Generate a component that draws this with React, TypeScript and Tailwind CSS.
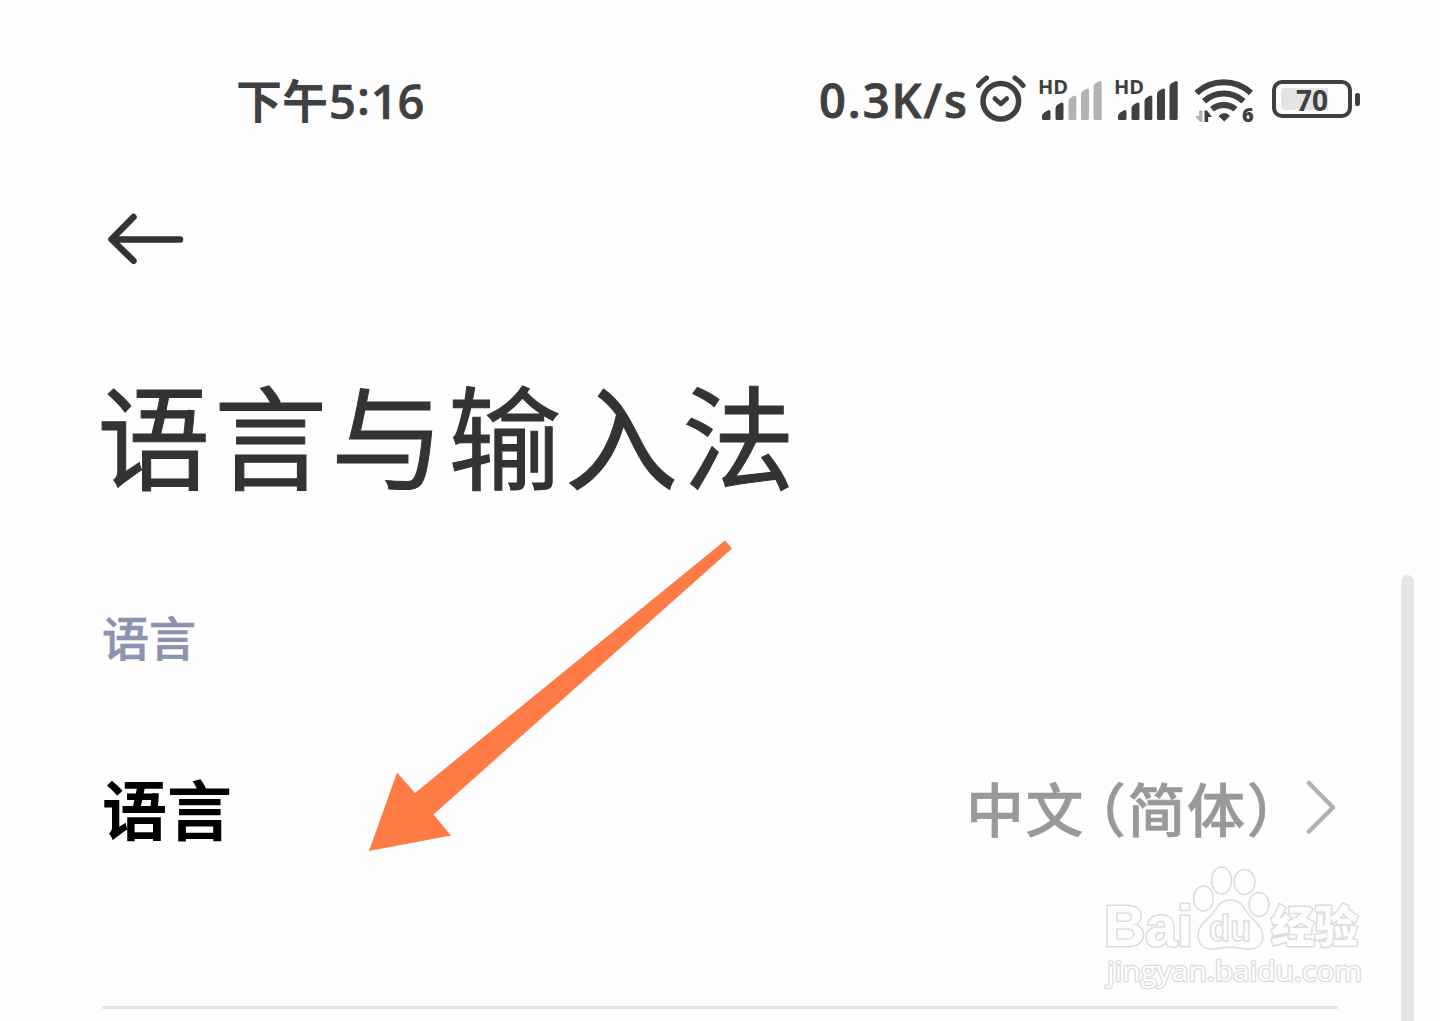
import React from "react";

interface SignalProps {
  active: number;
  className?: string;
}

const BARS = [
  "M2 43.500v-2.500q0-2 2-3.200l3.500-2.200q3-1.500 3 1.500v6.400q0 1.500-1.500 1.500h-5.500q-1.500 0-1.500-1.500z",
  "M15.500 43.500v-10.500q0-2 2-3.200l3-1.800q3-1.500 3 1.500v14q0 1.500-1.500 1.500h-5q-1.500 0-1.500-1.500z",
  "M28.500 43.500v-17.500q0-2 2-3.200l2.800-1.800q3-1.500 3 1.500v21q0 1.500-1.500 1.500h-4.800q-1.500 0-1.500-1.500z",
  "M41 43.500v-24.500q0-2 2-3.200l3-1.800q3-1.500 3 1.500v28q0 1.500-1.500 1.500h-5q-1.500 0-1.500-1.500z",
  "M53.500 43.500v-32q0-2 2-3.200l3.200-1.800q3-1.500 3 1.500v35.500q0 1.500-1.500 1.500h-5.200q-1.500 0-1.500-1.500z",
];

const Signal: React.FC<SignalProps> = ({ active, className }) => (
  <div className={`relative w-[64px] h-[50px] ${className ?? ""}`}>
    <span className="absolute left-[-2px] top-[2px] font-['Open_Sans',sans-serif] text-[20px] leading-[20px] font-bold">
      HD
    </span>
    <svg className="w-[64px] h-[50px]" viewBox="0 0 64 50">
      {BARS.map((d, i) => (
        <path key={d} d={d} fill={i < active ? "#404040" : "#b3b3b3"} />
      ))}
    </svg>
  </div>
);

const AlarmIcon: React.FC = () => (
  <svg
    className="w-[52px] h-[50px]"
    viewBox="0 0 52 50"
    fill="none"
    stroke="#404040"
  >
    <circle cx="24.800" cy="26.200" r="17.800" strokeWidth="5.500" />
    <path
      d="M18.800 23.500l6 5.500 6-5.500"
      strokeWidth="4.500"
      strokeLinecap="round"
      strokeLinejoin="round"
    />
    <path
      d="M2.500 10.500Q6 6 10.500 3M47 10.500Q43.500 6 39 3"
      strokeWidth="5"
      strokeLinecap="round"
    />
  </svg>
);

const WifiIcon: React.FC = () => (
  <div className="relative w-[60px] h-[50px]">
    <svg className="w-[60px] h-[50px]" viewBox="0 0 60 50" fill="none">
      <g stroke="#404040" strokeWidth="6">
        <path d="M1.500 18A40 40 0 0 1 56 18" />
        <path d="M9 26.300A29 29 0 0 1 48.500 26.300" />
        <path d="M17 34.300A18 18 0 0 1 40.500 34.300" />
      </g>
      <path
        d="M24 41q5.500-5 10.500 0l-5.200 5z"
        fill="#404040"
        stroke="#404040"
        strokeWidth="1"
        strokeLinejoin="round"
      />
      <path d="M7.500 35.500v11.500h-2.500l-5-6h4v-5.500z" fill="#b3b3b3" />
      <path d="M9.500 35.500h2.500l5 6.500h-3.800v5h-3.700z" fill="#404040" />
    </svg>
    <span className="absolute left-[47px] top-[30px] font-['Open_Sans',sans-serif] text-[20px] leading-[20px] font-extrabold">
      6
    </span>
  </div>
);

const Battery: React.FC = () => (
  <div className="flex items-center gap-[3px]">
    <div className="relative flex w-[80px] h-[38px] items-center justify-center rounded-[10px] border-4 border-[#404040]">
      <div className="absolute left-[5px] top-[4px] h-[22px] w-[47px] rounded-l-[3px] bg-[#e4e4e4]" />
      <span className="relative top-px font-['Open_Sans',sans-serif] text-[28px] leading-[28px] font-bold">
        70
      </span>
    </div>
    <div className="h-[13px] w-[5px] rounded-[2px] bg-[#404040]" />
  </div>
);

const Watermark: React.FC = () => (
  <svg
    className="absolute left-[1090px] top-[850px] h-[150px] w-[290px]"
    viewBox="0 0 290 150"
    fill="#fefefe"
    stroke="#dcdcdc"
    strokeWidth="1.500"
  >
    <g strokeWidth="3" paintOrder="stroke" strokeLinejoin="round">
      <text
        x="14"
        y="96"
        textLength="89"
        lengthAdjust="spacingAndGlyphs"
        className="font-['Liberation_Sans',sans-serif] text-[58px] font-bold"
      >
        Bai
      </text>
      <text
        x="181"
        y="93"
        textLength="87"
        lengthAdjust="spacingAndGlyphs"
        className="font-['Noto_Sans_CJK_SC',sans-serif] text-[44px] font-black"
      >
        经验
      </text>
      <text
        x="17"
        y="131"
        textLength="255"
        lengthAdjust="spacingAndGlyphs"
        strokeWidth="2.500"
        className="font-['Open_Sans',sans-serif] text-[28px]"
      >
        jingyan.baidu.com
      </text>
    </g>
    <ellipse cx="113.500" cy="48.500" rx="10" ry="12.500" />
    <ellipse cx="131.500" cy="30.500" rx="10" ry="13.500" />
    <ellipse cx="154.500" cy="32" rx="10.500" ry="12.500" />
    <ellipse cx="169" cy="54.500" rx="10" ry="12" />
    <path d="M140 50c9 0 13 5 17 12 5 8 16 14 16 25 0 8-6 12-14 12-7 0-13-2-19-2s-12 2-19 2c-8 0-13-6-13-14 0-11 11-16 16-23 4-7 8-12 16-12z" />
    <text
      x="119"
      y="91"
      textLength="42"
      lengthAdjust="spacingAndGlyphs"
      className="font-['Liberation_Sans',sans-serif] text-[36px] font-bold"
    >
      du
    </text>
  </svg>
);

export default function App() {
  return (
    <main className="relative flex h-[1021px] w-[1440px] flex-col overflow-hidden bg-[#fefefe] font-['Noto_Sans_CJK_SC',sans-serif] text-[#333333]">
      {/* Status bar */}
      <header className="mt-[75px] flex h-[50px] pl-[236px] text-[#404040]">
        <div className="mt-[-2px] flex w-[583px] text-[46px] leading-[50px] font-bold whitespace-nowrap">
          <span>下午</span>
          <span className="mt-[3px] ml-[1px] font-['Open_Sans',sans-serif] text-[47px] font-semibold [-webkit-text-stroke:0.6px_#404040]">
            5<span className="relative top-[-4px] mr-[1px] ml-[1px]">:</span>16
          </span>
        </div>
        <div className="w-[157px] font-['Open_Sans',sans-serif] text-[47px] leading-[50px] font-semibold tracking-[2px] whitespace-nowrap [-webkit-text-stroke:0.8px_#404040]">
          0.3K/s
        </div>
        <AlarmIcon />
        <Signal active={2} className="ml-[12px]" />
        <Signal active={5} className="ml-[12px]" />
        <div className="ml-[15px]">
          <WifiIcon />
        </div>
        <div className="mt-[5px] ml-[17px]">
          <Battery />
        </div>
      </header>

      <button
        type="button"
        className="mt-[87px] ml-[107px] h-[54px] w-[78px]"
        aria-label="返回"
      >
        <svg
          className="h-[54px] w-[78px]"
          viewBox="0 0 78 54"
          fill="none"
          stroke="#333333"
          strokeWidth="6.500"
          strokeLinecap="round"
          strokeLinejoin="round"
        >
          <path d="M26.500 5L4.500 27.300l22 21.500M6 27.500h67" />
        </svg>
      </button>

      <h1 className="mt-[86px] ml-[97px] text-[113px] leading-[160px] tracking-[4px] whitespace-nowrap [-webkit-text-stroke:1px_#333333]">
        语言与输入法
      </h1>

      <h2 className="mt-[92px] ml-[102px] text-[47px] leading-[64px] font-medium text-[#8c93b0] [-webkit-text-stroke:0.6px_#8c93b0]">
        语言
      </h2>

      <div className="mt-[97px] ml-[102px] flex h-[84px] w-[1236px] items-center justify-between">
        <span className="text-[65px] leading-[84px] font-bold text-black">
          语言
        </span>
        <div className="flex items-center text-[#999999]">
          <span className="text-[58px] leading-[84px] font-medium tracking-[1.5px] whitespace-nowrap [-webkit-text-stroke:0.6px_#999999]">
            中文
            <span className="ml-[12px] [font-feature-settings:'halt']">（</span>
            简体）
          </span>
          <svg
            className="h-[54px] w-[32px]"
            viewBox="0 0 32 54"
            fill="none"
            stroke="#b2b2b2"
            strokeWidth="4.500"
            strokeLinecap="round"
            strokeLinejoin="round"
          >
            <path d="M3 3l24 24.500L3 51.500" />
          </svg>
        </div>
      </div>

      <div className="mt-[157px] ml-[102px] h-[3px] w-[1236px] shrink-0 bg-[#e5e5e5]" />

      {/* Scrollbar */}
      <div className="absolute top-[575px] left-[1401px] h-[460px] w-[13px] rounded-full bg-[#e5e5e5]" />

      {/* Pointer arrow over the language row */}
      <svg
        className="absolute top-[520px] left-[340px] h-[350px] w-[420px]"
        viewBox="0 0 420 350"
      >
        <path
          d="M385 20.500L392 28.500L93.500 294.500L111 315.500L29 331L57 252.500L75 273Z"
          fill="#ff7b45"
        />
      </svg>

      <Watermark />
    </main>
  );
}
